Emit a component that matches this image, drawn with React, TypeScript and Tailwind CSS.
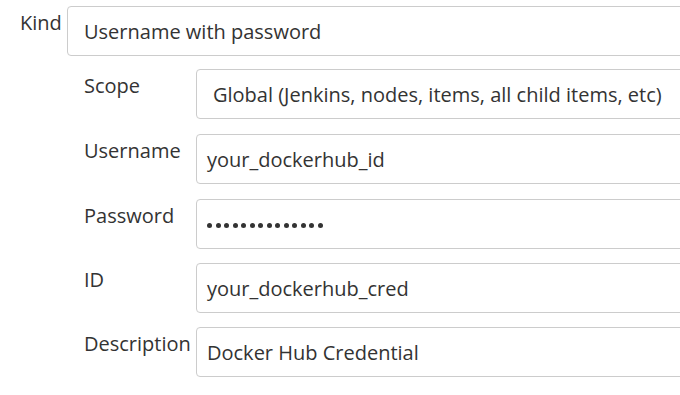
import React from 'react';

const fields = [
  { label: 'Scope', value: 'Global (Jenkins, nodes, items, all child items, etc)', select: true, mb: 'mb-[15px]' },
  { label: 'Username', value: 'your_dockerhub_id', mb: 'mb-[15px]' },
  { label: 'Password', value: '', password: true, mb: 'mb-[14px]' },
  { label: 'ID', value: 'your_dockerhub_cred', mb: 'mb-[14px]' },
  { label: 'Description', value: 'Docker Hub Credential', mb: '' },
];

function Dots({ count }: { count: number }) {
  return (
    <div className="flex gap-[3.5px] pt-[1px]">
      {Array.from({ length: count }).map((_, i) => (
        <span key={i} className="w-[5px] h-[5px] rounded-full bg-[#333]" />
      ))}
    </div>
  );
}

export default function App() {
  return (
    <div className="w-[680px] h-[395px] overflow-hidden bg-white text-[#333] text-[20px] font-['Open_Sans',sans-serif]">
      <div className="flex pt-[6px]">
        <label className="w-[67px] pl-[20px] pt-[3px] leading-[28px] shrink-0">Kind</label>
        <div className="w-[700px] h-[50px] shrink-0 border border-[#ccc] rounded-[4px] pl-[16px] pt-[2px] flex items-center">
          Username with password
        </div>
      </div>
      <div className="flex flex-col pt-[13px]">
        {fields.map(f => (
          <div key={f.label} className={`flex ${f.mb}`}>
            <label className="w-[196px] pl-[84px] pt-[3px] leading-[28px] shrink-0">{f.label}</label>
            <div
              className={`w-[600px] h-[50px] shrink-0 border border-[#ccc] rounded-[4px] pt-[2px] flex items-center ${f.select ? 'pl-[16px]' : 'pl-[10px]'}`}
            >
              {f.password ? <Dots count={14} /> : f.value}
            </div>
          </div>
        ))}
      </div>
    </div>
  );
}
